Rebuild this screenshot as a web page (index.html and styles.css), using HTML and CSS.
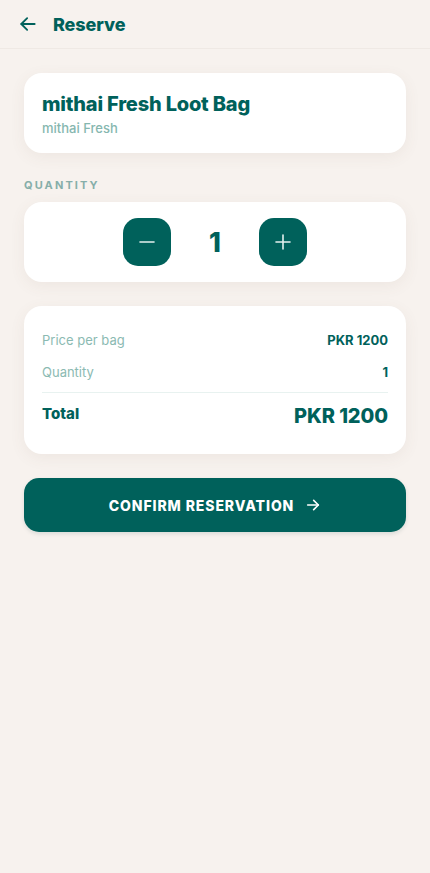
FILE: index.html
```html
<!DOCTYPE html>
<html lang="en">
<head>
    <meta charset="UTF-8">
    <meta name="viewport" content="width=device-width, initial-scale=1.0">
    <title>Reserve</title>
    <link rel="stylesheet" href="styles.css">
</head>
<body>
    <header class="topbar">
        <button class="back-btn" aria-label="Back">
            <svg width="20" height="20" viewBox="0 0 24 24" fill="none" stroke="currentColor" stroke-width="2.2" stroke-linecap="round" stroke-linejoin="round">
                <path d="M20 12H4"/>
                <path d="M11 5l-7 7 7 7"/>
            </svg>
        </button>
        <h1>Reserve</h1>
    </header>

    <main class="content">
        <section class="card bag-card">
            <h2 class="bag-title">mithai Fresh Loot Bag</h2>
            <p class="bag-store">mithai Fresh</p>
        </section>

        <p class="section-label">QUANTITY</p>
        <section class="card qty-card">
            <button class="qty-btn" aria-label="Decrease">
                <svg width="18" height="18" viewBox="0 0 18 18" fill="none" stroke="currentColor" stroke-width="1.6" stroke-linecap="round">
                    <path d="M2 9h14"/>
                </svg>
            </button>
            <span class="qty-value">1</span>
            <button class="qty-btn" aria-label="Increase">
                <svg width="18" height="18" viewBox="0 0 18 18" fill="none" stroke="currentColor" stroke-width="1.6" stroke-linecap="round">
                    <path d="M2 9h14"/>
                    <path d="M9 2v14"/>
                </svg>
            </button>
        </section>

        <section class="card summary-card">
            <div class="row">
                <span class="row-label">Price per bag</span>
                <span class="row-value">PKR 1200</span>
            </div>
            <div class="row">
                <span class="row-label">Quantity</span>
                <span class="row-value">1</span>
            </div>
            <div class="row total-row">
                <span class="total-label">Total</span>
                <span class="total-value">PKR 1200</span>
            </div>
        </section>

        <button class="confirm-btn">
            CONFIRM RESERVATION
            <svg width="16" height="16" viewBox="0 0 24 24" fill="none" stroke="currentColor" stroke-width="2.4" stroke-linecap="round" stroke-linejoin="round">
                <path d="M4 12h16"/>
                <path d="M13 5l7 7-7 7"/>
            </svg>
        </button>
    </main>
</body>
</html>
```

FILE: styles.css
```css
* {
    margin: 0;
    padding: 0;
    box-sizing: border-box;
}

body {
    font-family: Inter, "Noto Sans", sans-serif;
    background-color: #f7f2ee;
    color: #00615b;
    min-height: 100vh;
}

.topbar {
    height: 49px;
    display: flex;
    align-items: center;
    gap: 15px;
    padding: 0 18px;
    border-bottom: 1px solid #efe9e4;
}

.back-btn {
    background: none;
    border: none;
    color: #00615b;
    display: flex;
    cursor: pointer;
}

.topbar h1 {
    font-size: 18px;
    font-weight: 800;
    letter-spacing: -0.1px;
}

.content {
    padding: 24px 24px;
}

.card {
    background-color: white;
    border-radius: 18px;
    box-shadow: 0 4px 16px rgba(120, 90, 70, 0.07);
}

.bag-card {
    padding: 18px 18px 17px;
    height: 80px;
}

.bag-title {
    font-size: 20px;
    font-weight: 800;
    letter-spacing: -0.2px;
    line-height: 26px;
}

.bag-store {
    font-size: 13px;
    font-weight: 500;
    color: #86b7af;
    margin-top: 3px;
}

.section-label {
    margin: 25px 0 10px;
    font-size: 11px;
    font-weight: 700;
    letter-spacing: 2.1px;
    color: #86aea9;
}

.qty-card {
    height: 80px;
    display: flex;
    align-items: center;
    justify-content: center;
    gap: 36px;
}

.qty-btn {
    width: 48px;
    height: 48px;
    border: none;
    border-radius: 15px;
    background-color: #00615b;
    color: #e3f0ee;
    display: flex;
    align-items: center;
    justify-content: center;
    cursor: pointer;
}

.qty-value {
    font-size: 27px;
    font-weight: 800;
    width: 16px;
    text-align: center;
}

.summary-card {
    margin-top: 24px;
    padding: 18px 18px 0;
    height: 148px;
}

.row {
    display: flex;
    justify-content: space-between;
    align-items: center;
    height: 32px;
}

.row-label {
    font-size: 13px;
    color: #8bbab2;
}

.row-value {
    font-size: 13px;
    font-weight: 700;
}

.total-row {
    margin-top: 4px;
    border-top: 1px solid #e8f2f0;
    padding-top: 10px;
    height: auto;
    align-items: flex-start;
}

.total-label {
    font-size: 15px;
    font-weight: 800;
    line-height: 22px;
}

.total-value {
    font-size: 20px;
    font-weight: 800;
    letter-spacing: -0.1px;
    line-height: 26px;
}

.confirm-btn {
    margin-top: 24px;
    width: 100%;
    height: 54px;
    border: none;
    border-radius: 15px;
    background-color: #00615b;
    color: white;
    font-family: Inter, "Noto Sans", sans-serif;
    font-size: 14px;
    font-weight: 800;
    letter-spacing: 0.9px;
    display: flex;
    align-items: center;
    justify-content: center;
    gap: 11px;
    cursor: pointer;
    box-shadow: 0 2px 4px rgba(0, 60, 55, 0.12);
}
```
